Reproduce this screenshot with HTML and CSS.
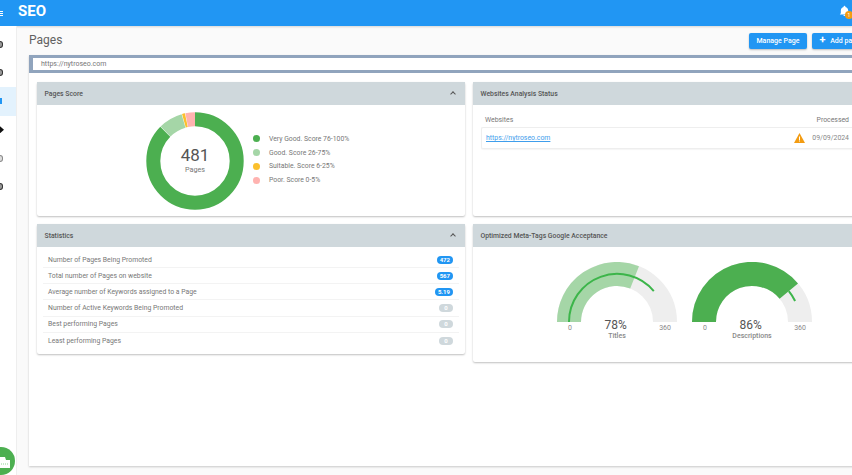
FILE: index.html
```html
<!DOCTYPE html>
<html lang="en">
<head>
    <meta charset="UTF-8">
    <title>SEO - Pages</title>
    <link rel="stylesheet" href="styles.css">
</head>
<body>
    <header class="topbar">
        <div class="menu-btn"><span></span><span></span><span></span></div>
        <div class="brand">SEO</div>
        <div class="bell">
            <svg width="11" height="12" viewBox="0 0 24 24"><path fill="#fff" d="M12 23a2.500 2.500 0 0 0 2.500-2.500h-5A2.500 2.500 0 0 0 12 23zm8-6v-6c0-3.800-2.400-6.900-6-7.700V2.500a2 2 0 0 0-4 0v.8C6.400 4.100 4 7.200 4 11v6l-2 2v.5h20V19z"/></svg>
            <span class="bell-badge">1</span>
        </div>
    </header>

    <div class="layout">
        <nav class="sidebar">
            <div class="side-item"><span class="side-icon ring"></span></div>
            <div class="side-item"><span class="side-icon ring"></span></div>
            <div class="side-item active"><span class="side-icon doc"></span></div>
            <div class="side-item"><span class="side-icon diamond"></span></div>
            <div class="side-item"><span class="side-icon ring faint"></span></div>
            <div class="side-item"><span class="side-icon ring"></span></div>
        </nav>

        <main class="content">
            <div class="page-head">
                <h1>Pages</h1>
                <div class="actions">
                    <button class="btn">Manage Page</button>
                    <button class="btn btn-add"><b>+</b> Add page</button>
                </div>
            </div>

            <div class="sheet">
                <div class="url-bar">https://nytroseo.com</div>

                <div class="grid">
                    <section class="panel">
                        <div class="panel-head">Pages Score <i class="caret"></i></div>
                        <div class="score-body">
                            <div class="donut">
                                <svg width="98" height="98" viewBox="0 0 98 98">
                                    <g fill="none" stroke-width="14" transform="rotate(-90 49 49)">
                                        <circle cx="49" cy="49" r="41.700" pathLength="360" stroke="#4caf50" stroke-dasharray="314.500 360"/>
                                        <circle cx="49" cy="49" r="41.700" pathLength="360" stroke="#a5d6a7" stroke-dasharray="29 360" stroke-dashoffset="-315"/>
                                        <circle cx="49" cy="49" r="41.700" pathLength="360" stroke="#fbc02d" stroke-dasharray="3.500 360" stroke-dashoffset="-344.500"/>
                                        <circle cx="49" cy="49" r="41.700" pathLength="360" stroke="#ffb3b0" stroke-dasharray="11.500 360" stroke-dashoffset="-348.500"/>
                                    </g>
                                </svg>
                                <div class="donut-label"><strong>481</strong><span>Pages</span></div>
                            </div>
                            <ul class="legend">
                                <li><span class="dot dot-green"></span>Very Good. Score 76-100%</li>
                                <li><span class="dot dot-light"></span>Good. Score 26-75%</li>
                                <li><span class="dot dot-yellow"></span>Suitable. Score 6-25%</li>
                                <li><span class="dot dot-pink"></span>Poor. Score 0-5%</li>
                            </ul>
                        </div>
                    </section>

                    <section class="panel">
                        <div class="panel-head">Websites Analysis Status</div>
                        <div class="status-body">
                            <div class="status-cols"><span>Websites</span><span>Processed</span></div>
                            <div class="status-row">
                                <a href="#">https://nytroseo.com</a>
                                <svg class="warn" width="11" height="10" viewBox="0 0 22 20"><path fill="#f39c12" d="M11 0 22 20H0z"/><path fill="#fff" d="M10 7h2v7h-2zM10 15h2v2h-2z"/></svg>
                                <span class="date">09/09/2024</span>
                            </div>
                        </div>
                    </section>

                    <section class="panel panel-stats">
                        <div class="panel-head">Statistics <i class="caret"></i></div>
                        <ul class="stats">
                            <li>Number of Pages Being Promoted <span class="pill">472</span></li>
                            <li>Total number of Pages on website <span class="pill">567</span></li>
                            <li>Average number of Keywords assigned to a Page <span class="pill">5.19</span></li>
                            <li>Number of Active Keywords Being Promoted <span class="pill zero">0</span></li>
                            <li>Best performing Pages <span class="pill zero">0</span></li>
                            <li>Least performing Pages <span class="pill zero">0</span></li>
                        </ul>
                    </section>

                    <section class="panel panel-meta">
                        <div class="panel-head">Optimized Meta-Tags Google Acceptance</div>
                        <div class="gauges">
                            <div class="gauge">
                                <svg width="120" height="60" viewBox="0 0 120 60" fill="none">
                                    <path d="M12 60A48 48 0 0 1 108 60" stroke="#eeeeee" stroke-width="24"/>
                                    <path d="M12 60A48 48 0 0 1 77.600 15.300" stroke="#a5d6a7" stroke-width="24"/>
                                    <path d="M12 60A48 48 0 0 1 96.800 29.100" stroke="#3cb54a" stroke-width="2"/>
                                </svg>
                                <div class="gauge-scale"><span>0</span><strong>78%</strong><span>360</span></div>
                                <div class="gauge-name">Titles</div>
                            </div>
                            <div class="gauge">
                                <svg width="120" height="60" viewBox="0 0 120 60" fill="none">
                                    <path d="M12 60A48 48 0 0 1 108 60" stroke="#eeeeee" stroke-width="24"/>
                                    <path d="M12 60A48 48 0 0 1 96.800 29.100" stroke="#4caf50" stroke-width="24"/>
                                    <path d="M96.800 29.100A48 48 0 0 1 103.100 39" stroke="#3cb54a" stroke-width="2"/>
                                </svg>
                                <div class="gauge-scale"><span>0</span><strong>86%</strong><span>360</span></div>
                                <div class="gauge-name">Descriptions</div>
                            </div>
                        </div>
                    </section>
                </div>
            </div>
        </main>
    </div>

    <div class="chat-bubble">
        <svg width="10" height="12" viewBox="0 0 10 12"><path fill="#fff" d="M0 0h5l1 3h4v8H0z"/><path stroke="#8fd694" stroke-dasharray="1 1" d="M1 7h7"/></svg>
    </div>
</body>
</html>
```
FILE: styles.css
```css
* {
    box-sizing: border-box;
}

body {
    margin: 0;
    width: 852px;
    height: 475px;
    overflow: hidden;
    background-color: #fafafa;
    font-family: "Roboto", "Liberation Sans", sans-serif;
    color: #777;
    position: relative;
}

.topbar {
    height: 26px;
    background-color: #2196f3;
    display: flex;
    align-items: center;
    color: #fff;
    box-shadow: 0 1px 2px rgba(0, 0, 0, 0.15);
}

.menu-btn {
    width: 18px;
    display: flex;
    flex-direction: column;
    gap: 1px;
}

.menu-btn span {
    width: 3px;
    height: 1px;
    background-color: #fff;
}

.brand {
    font-size: 15px;
    font-weight: 700;
    line-height: 20px;
    margin-top: -5px;
}

.bell {
    margin-left: auto;
    margin-right: -2px;
    width: 14px;
    height: 14px;
    margin-top: -3px;
    position: relative;
}

.bell svg {
    display: block;
    margin-left: -1px;
}

.bell-badge {
    position: absolute;
    left: 5px;
    top: 6px;
    width: 8px;
    height: 8px;
    border-radius: 50%;
    background-color: #f39c12;
    font-size: 5px;
    line-height: 8px;
    text-align: center;
}

.layout {
    display: flex;
    height: 449px;
}

.sidebar {
    width: 17px;
    background-color: #fff;
    border-right: 1px solid #eeeeee;
    padding-top: 4px;
    flex: none;
}

.side-item {
    height: 28.500px;
    display: flex;
    align-items: center;
    overflow: hidden;
}

.side-item.active {
    background-color: #e3f2fd;
}

.side-icon {
    display: block;
    width: 3px;
    height: 7px;
    background-color: #333;
}

.side-icon.ring {
    background-color: #999;
    border: 1.500px solid #333;
    border-left: none;
    border-radius: 0 4px 4px 0;
}

.side-icon.ring.faint {
    border-color: #888;
    background-color: #ddd;
}

.side-icon.doc {
    background-color: #2196f3;
    width: 2px;
    height: 6px;
}

.side-icon.diamond {
    width: 4px;
    background-color: #111;
    clip-path: polygon(0 0, 100% 50%, 0 100%);
}

.content {
    flex: 1;
    min-width: 0;
    padding-left: 12px;
}

.page-head {
    height: 29px;
    display: flex;
    align-items: center;
}

.page-head h1 {
    width: 720px;
    flex: none;
    margin: -1px 0 0;
    font-size: 12px;
    font-weight: 400;
    color: #616161;
}

.actions {
    display: flex;
    gap: 5px;
    flex: none;
}

.btn {
    height: 16px;
    padding: 0 7.500px;
    border: none;
    border-radius: 2px;
    background-color: #2196f3;
    color: #fff;
    font-family: inherit;
    font-size: 7px;
    font-weight: 500;
    white-space: nowrap;
    box-shadow: 0 1px 2px rgba(0, 0, 0, 0.25);
}

.btn b {
    font-size: 11px;
    line-height: 8px;
    margin-right: 3px;
}

.sheet {
    width: 880px;
    height: 411px;
    background-color: #fff;
    box-shadow: 0 1px 2px rgba(0, 0, 0, 0.2);
}

.url-bar {
    height: 18px;
    border: 3px solid #90a4bd;
    border-width: 3px 3px 3px 4px;
    background-color: #fff;
    font-size: 7px;
    line-height: 12px;
    padding-left: 8px;
}

.grid {
    display: grid;
    grid-template-columns: 428px 428px;
    grid-template-rows: 134px 138px;
    gap: 8px;
    padding: 9px 8px 0;
}

.panel {
    background-color: #fff;
    box-shadow: 0 1px 2px rgba(0, 0, 0, 0.25);
    border-radius: 2px;
}

.panel-stats {
    height: 130px;
}

.panel-head {
    height: 23px;
    background-color: #cfd8dc;
    display: flex;
    align-items: center;
    justify-content: space-between;
    padding: 0 8px;
    padding-left: 7.500px;
    font-size: 6.850px;
    font-weight: 500;
    color: #555;
}

.caret {
    width: 4px;
    height: 4px;
    border-left: 1px solid #555;
    border-top: 1px solid #555;
    transform: rotate(45deg);
    margin: 1px 2px 0 0;
}

.score-body {
    display: flex;
    align-items: center;
    padding: 7px 0 0 109px;
    gap: 9px;
}

.donut {
    position: relative;
    width: 98px;
    height: 98px;
}

.donut svg {
    display: block;
}

.donut-label {
    position: absolute;
    inset: 0;
    display: flex;
    flex-direction: column;
    align-items: center;
    justify-content: center;
}

.donut-label strong {
    font-size: 17px;
    font-weight: 400;
    line-height: 17px;
    color: #555;
}

.donut-label span {
    font-size: 7.200px;
    line-height: 11px;
    color: #777;
}

.legend {
    list-style: none;
    margin: 0 0 3px;
    padding: 0;
    font-size: 6.850px;
}

.legend li {
    height: 13.700px;
    display: flex;
    align-items: center;
    gap: 9px;
}

.dot {
    width: 7px;
    height: 7px;
    border-radius: 50%;
}

.dot-green { background-color: #4caf50; }
.dot-light { background-color: #a5d6a7; }
.dot-yellow { background-color: #fbc02d; }
.dot-pink { background-color: #ffb3b0; }

.status-body {
    width: 384px;
    padding: 7px 0 0 8px;
    font-size: 6.900px;
}

.status-cols {
    display: flex;
    justify-content: space-between;
    height: 15px;
    align-items: center;
    padding: 0 8px 0 4px;
}

.status-row {
    display: flex;
    align-items: center;
    height: 22px;
    width: 376px;
    padding: 0 8px 0 4px;
    border: 1px solid #eeeeee;
    border-width: 1px 0 1px 1px;
    border-radius: 2px 0 0 2px;
    box-shadow: 0 1px 1px rgba(0, 0, 0, 0.04);
}

.status-row a {
    color: #3f9eec;
}

.warn {
    margin-left: auto;
    margin-right: 7px;
}

.date {
    color: #888;
}

.stats {
    list-style: none;
    margin: 5px 0 0;
    padding: 0 6px;
    font-size: 6.850px;
}

.stats li {
    height: 16.150px;
    display: flex;
    align-items: center;
    justify-content: space-between;
    padding: 0 6px 0 5px;
    border-bottom: 1px solid #f3f3f3;
}

.stats li:last-child {
    border-bottom: none;
}

.pill {
    min-width: 14px;
    height: 8px;
    padding: 0 3px;
    border-radius: 4px;
    background-color: #2196f3;
    color: #fff;
    font-size: 6px;
    font-weight: 700;
    line-height: 8px;
    text-align: center;
}

.pill.zero {
    background-color: #cfd8dc;
}

.gauges {
    display: flex;
    padding: 15px 0 0 84px;
    gap: 15px;
}

.gauge {
    width: 120px;
    text-align: center;
}

.gauge svg {
    display: block;
}

.gauge-scale {
    display: flex;
    justify-content: space-between;
    align-items: flex-start;
    padding: 1px 6px 0 11px;
    font-size: 7px;
    color: #888;
    line-height: 11px;
}

.gauge-scale strong {
    font-size: 12px;
    font-weight: 400;
    line-height: 14px;
    margin-top: -5px;
    color: #555;
}

.gauge-name {
    font-size: 7px;
    font-weight: 500;
    color: #888;
    line-height: 8px;
    margin-top: -2px;
}

.chat-bubble {
    position: absolute;
    left: -13px;
    top: 447px;
    width: 28px;
    height: 28px;
    border-radius: 50%;
    background-color: #4caf50;
    display: flex;
    align-items: center;
    justify-content: flex-end;
    padding: 4px 5px 0 0;
}

.chat-bubble svg {
    display: block;
}
```
